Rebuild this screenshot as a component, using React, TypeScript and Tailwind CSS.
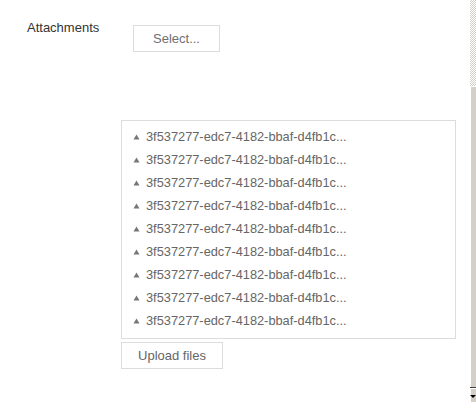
import React from "react";

const Tri = () => (
  <svg width="7" height="6" viewBox="0 0 7 6" className="shrink-0">
    <path d="M3.5 0.5 L6.5 5.5 L0.5 5.5 Z" fill="#777" />
  </svg>
);

export default function App() {
  const items = Array.from({ length: 9 });
  return (
    <div className="flex h-[402px] w-[476px] overflow-hidden bg-white font-['Liberation_Sans',Arial,sans-serif]">
      <div className="w-[470px] shrink-0">
        <div className="flex pl-[27px] pt-[20px]">
          <div className="w-[106px] text-[13px] leading-[15px] text-[#333]">Attachments</div>
          <button className="mt-[5px] flex h-[27px] w-[87px] items-center justify-center border border-[#dcdcdc] bg-white text-[13px] text-[#707070]">
            Select...
          </button>
        </div>
        <div className="ml-[121px] mt-[68px] h-[219px] w-[335px] border border-[#dcdcdc] pl-[11px] pt-[4px]">
          {items.map((_, i) => (
            <div key={i} className="flex h-[23px] items-center gap-[6px] text-[12.8px] text-[#666]">
              <Tri />
              <span>3f537277-edc7-4182-bbaf-d4fb1c...</span>
            </div>
          ))}
        </div>
        <button className="ml-[121px] mt-[3px] flex h-[27px] w-[102px] items-center justify-center border border-[#dcdcdc] bg-white text-[13px] text-[#666]">
          Upload files
        </button>
      </div>
      <div className="flex w-[6px] flex-col">
        <div className="h-[86px] bg-[repeating-conic-gradient(#d4d0c8_0_25%,#ffffff_0_50%)] bg-[length:2px_2px]" />
        <div className="h-[301px] border-l border-t border-white bg-[#d4d0c8]" />
        <div className="h-[1px] bg-[#404040]" />
        <div className="flex flex-1 items-start justify-end border-l border-t border-white bg-[#d4d0c8] pt-[6px]">
          <div className="h-0 w-0 border-l-[3px] border-r-[3px] border-t-[3px] border-l-transparent border-r-transparent border-t-black" />
        </div>
      </div>
    </div>
  );
}
